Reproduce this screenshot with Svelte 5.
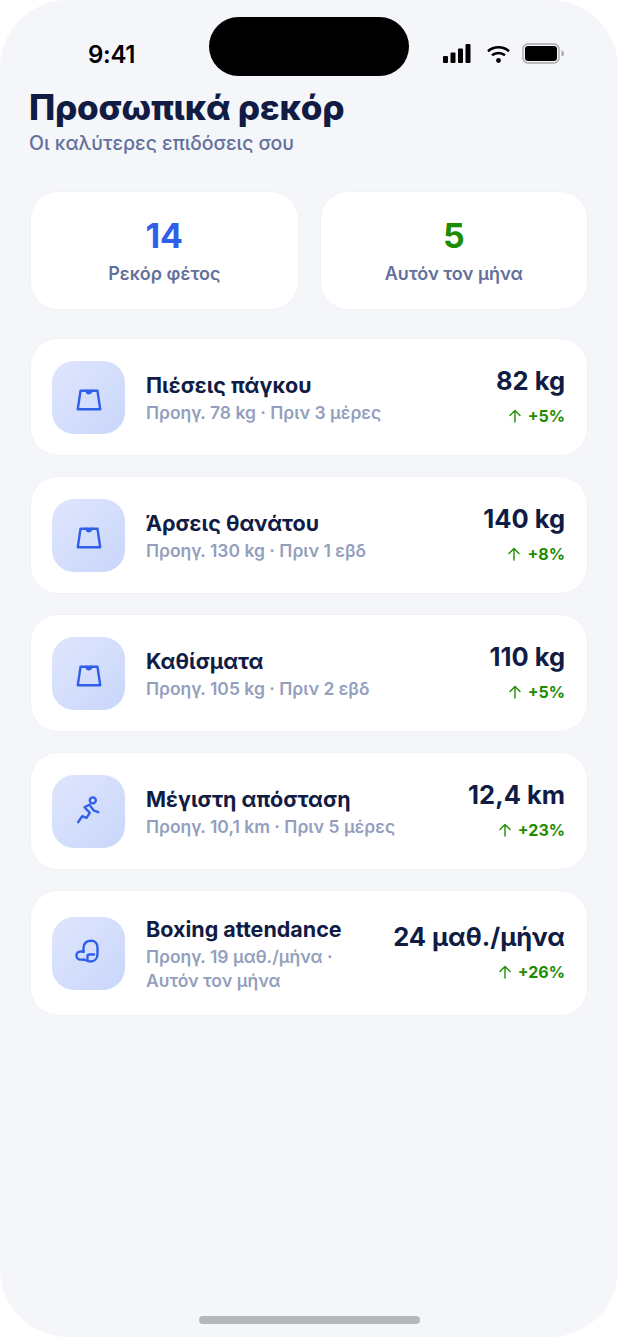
<script>
  const stats = [
    { value: '14', label: 'Ρεκόρ φέτος', tone: 'blue' },
    { value: '5', label: 'Αυτόν τον μήνα', tone: 'green' }
  ];
  const records = [
    { icon: 'weight', name: 'Πιέσεις πάγκου', sub: 'Προηγ. 78 kg · Πριν 3 μέρες', value: '82 kg', delta: '+5%' },
    { icon: 'weight', name: 'Άρσεις θανάτου', sub: 'Προηγ. 130 kg · Πριν 1 εβδ', value: '140 kg', delta: '+8%' },
    { icon: 'weight', name: 'Καθίσματα', sub: 'Προηγ. 105 kg · Πριν 2 εβδ', value: '110 kg', delta: '+5%' },
    { icon: 'run', name: 'Μέγιστη απόσταση', sub: 'Προηγ. 10,1 km · Πριν 5 μέρες', value: '12,4 km', delta: '+23%' },
    { icon: 'glove', name: 'Boxing attendance', sub: 'Προηγ. 19 μαθ./μήνα · Αυτόν τον μήνα', value: '24 μαθ./μήνα', delta: '+26%' }
  ];
</script>

<div class="phone">
  <div class="island"></div>
  <header class="status">
    <span class="time">9:41</span>
    <div class="status-icons">
      <svg class="signal" width="28" height="19" viewBox="0 0 28 19" fill="#000">
        <rect x="0" y="12" width="5" height="7" rx="1" />
        <rect x="7.5" y="8.5" width="5" height="10.5" rx="1" />
        <rect x="15" y="4.5" width="5" height="14.5" rx="1" />
        <rect x="22.5" y="0" width="5" height="19" rx="1" />
      </svg>
      <svg width="23" height="18" viewBox="0 0 23 18" fill="none" stroke="#000" stroke-width="2.6">
        <path d="M1 6.2C7 1 16 1 22 6.2" />
        <path d="M5 10.2C8.8 7.2 14.2 7.2 18 10.2" />
        <circle cx="11.5" cy="15.5" r="2.4" fill="#000" stroke="none" />
      </svg>
      <svg width="43" height="21" viewBox="0 0 43 21" fill="none">
        <rect x="1" y="1" width="36" height="19" rx="5" stroke="#a9a9ad" stroke-width="1.4" />
        <rect x="3" y="3" width="32" height="15" rx="3.2" fill="#000" />
        <path d="M39.5 7.5C41.5 8 42 9 42 10.5S41.5 13 39.5 13.5Z" fill="#a9a9ad" />
      </svg>
    </div>
  </header>

  <main class="content">
    <h1>Προσωπικά ρεκόρ</h1>
    <p class="subtitle">Οι καλύτερες επιδόσεις σου</p>

    <section class="stats">
      {#each stats as s}
        <div class="card stat">
          <div class="stat-value {s.tone}">{s.value}</div>
          <div class="stat-label">{s.label}</div>
        </div>
      {/each}
    </section>

    <section class="list">
      {#each records as r}
        <article class="card record">
          <div class="icon-box">
            <svg class="glyph" width="26" height="26" viewBox="0 0 26 26" fill="none" stroke="#2f5fe8" stroke-width="2.4" stroke-linecap="round" stroke-linejoin="round">
              {#if r.icon === 'weight'}
                <path d="M4.5 6.8H21.5L24.2 25.2H1.8Z" />
                <path d="M10.6 6.8a2.4 2.4 0 0 0 4.8 0" />
              {:else if r.icon === 'run'}
                <circle cx="16.8" cy="2.4" r="3" />
                <path d="M13.8 6.5L8.5 9.2L13.8 14.8L10.5 19.8L6.2 18.2L2.2 24.2" />
                <path d="M14.5 8.2L17.8 12.5L22.2 14.2" />
              {:else}
                <path d="M7.5 12V8C7.5 3 11 0.8 15 0.8S21.5 3.5 21.5 7.5V14C21.5 18.5 18.5 21.5 14.5 21.5C12 21.5 10 19.6 7.5 19.6" />
                <path d="M7.5 11.5H4.5A4 4 0 0 0 4.5 19.6H8" />
                <path d="M11.5 19V16C11.5 15 12.5 14.5 13.5 14.5H18" />
              {/if}
            </svg>
          </div>
          <div class="info">
            <div class="name">{r.name}</div>
            <div class="sub">{r.sub}</div>
          </div>
          <div class="result">
            <div class="value">{r.value}</div>
            <div class="delta">
              <svg width="14" height="14" viewBox="0 0 14 14" fill="none" stroke="#1e8c00" stroke-width="1.4" stroke-linecap="round" stroke-linejoin="round">
                <path d="M7 13V1.5M2 6.5L7 1.5L12 6.5" />
              </svg>
              <span>{r.delta}</span>
            </div>
          </div>
        </article>
      {/each}
    </section>
  </main>

  <div class="home-bar"></div>
</div>

<style>
  :global(body) {
    margin: 0;
    background: #fff;
  }
  .phone {
    position: relative;
    width: 618px;
    height: 1337px;
    background: #f5f6fa;
    border-radius: 68px;
    overflow: hidden;
    font-family: Inter, "Noto Sans", sans-serif;
    color: #101c44;
  }
  .island {
    position: absolute;
    left: 209px;
    top: 17px;
    width: 200px;
    height: 59px;
    border-radius: 30px;
    background: #000;
  }
  .status {
    height: 87px;
    box-sizing: border-box;
    padding: 41px 53px 0 88px;
    display: flex;
    justify-content: space-between;
    align-items: flex-start;
  }
  .time {
    font-size: 24px;
    line-height: 28px;
    font-weight: 600;
    letter-spacing: -0.3px;
    color: #000;
  }
  .status-icons {
    display: flex;
    align-items: center;
    gap: 12px;
    margin-top: 2px;
  }
  .signal {
    margin-right: 4px;
  }
  .content {
    padding: 0 30px;
  }
  h1 {
    margin: 0 0 0 -1px;
    font-size: 35px;
    line-height: 40px;
    font-weight: 800;
    letter-spacing: -0.2px;
    color: #101c44;
  }
  .subtitle {
    margin: 3px 0 0 -1px;
    font-size: 19.5px;
    line-height: 26px;
    font-weight: 500;
    color: #63709b;
  }
  .stats {
    display: grid;
    grid-template-columns: 1fr 1fr;
    gap: 21px;
    margin-top: 35px;
  }
  .card {
    background: #fff;
    border-radius: 28px;
    border: 1px solid #f0f2f7;
  }
  .stat {
    height: 119px;
    display: flex;
    flex-direction: column;
    align-items: center;
    padding-top: 24px;
    box-sizing: border-box;
  }
  .stat-value {
    font-size: 34px;
    line-height: 40px;
    font-weight: 700;
  }
  .blue { color: #2f5fe8; }
  .green { color: #1e8c00; }
  .stat-label {
    margin-top: 6px;
    font-size: 18px;
    line-height: 24px;
    font-weight: 600;
    color: #63709b;
  }
  .list {
    display: flex;
    flex-direction: column;
    gap: 20px;
    margin-top: 28px;
  }
  .record {
    min-height: 118px;
    box-sizing: border-box;
    padding: 21.5px 22px 21.5px 21px;
    display: flex;
    align-items: center;
    gap: 21px;
  }
  .icon-box {
    flex: none;
    width: 73px;
    height: 73px;
    border-radius: 22px;
    background: linear-gradient(135deg, #dfe6fd, #c9d6fb);
    display: flex;
    align-items: center;
    justify-content: center;
  }
  .glyph {
    overflow: visible;
  }
  .info {
    flex: 1;
    min-width: 0;
  }
  .name {
    font-size: 21.5px;
    line-height: 32px;
    font-weight: 700;
    color: #101c44;
  }
  .sub {
    font-size: 17.5px;
    line-height: 24.5px;
    font-weight: 600;
    color: #949fbe;
  }
  .result {
    flex: none;
    text-align: right;
    margin-left: 12px;
    padding-bottom: 2px;
  }
  .value {
    font-size: 25.5px;
    line-height: 32px;
    font-weight: 700;
    color: #101c44;
  }
  .delta {
    margin-top: 8px;
    display: flex;
    justify-content: flex-end;
    align-items: center;
    gap: 6px;
    font-size: 16px;
    line-height: 22px;
    font-weight: 700;
    color: #1e8c00;
  }
  .home-bar {
    position: absolute;
    left: 199px;
    top: 1316px;
    width: 221px;
    height: 8px;
    border-radius: 4px;
    background: #b6b7bb;
  }
</style>
